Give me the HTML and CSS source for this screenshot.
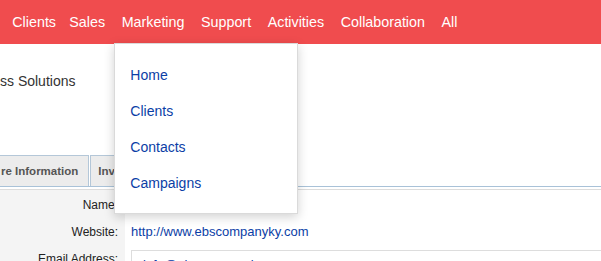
FILE: index.html
```html
<!DOCTYPE html>
<html lang="en">
<head>
    <meta charset="UTF-8">
    <title>Client - EBS</title>
    <link rel="stylesheet" href="styles.css">
</head>
<body>
    <header class="topbar">
        <nav class="menu">
            <span class="menu-item">Clients</span>
            <span class="menu-item">Sales</span>
            <span class="menu-item menu-open">Marketing
                <ul class="dropdown">
                    <li><a href="#">Home</a></li>
                    <li><a href="#">Clients</a></li>
                    <li><a href="#">Contacts</a></li>
                    <li><a href="#">Campaigns</a></li>
                </ul>
            </span>
            <span class="menu-item">Support</span>
            <span class="menu-item">Activities</span>
            <span class="menu-item">Collaboration</span>
            <span class="menu-item">All</span>
        </nav>
    </header>

    <div class="company">ss Solutions</div>

    <div class="tabs">
        <div class="tab">re Information</div>
        <div class="tab">Invoices</div>
    </div>
    <div class="tab-rule"></div>

    <div class="details">
        <div class="label">Name:</div>
        <div class="value">EBS Company</div>
        <div class="label">Website:</div>
        <div class="value"><a href="#">http://www.ebscompanyky.com</a></div>
        <div class="label">Email Address:</div>
        <div class="value"><div class="value-box"><a href="#">info@ebscompanyky.com</a></div></div>
    </div>
</body>
</html>
```

FILE: styles.css
```css
body {
    margin: 0;
    font-family: "Liberation Sans", Arial, sans-serif;
    background-color: #fff;
    overflow: hidden;
}

/* top navigation */
.topbar {
    background-color: #f04c4e;
    height: 44px;
}
.menu {
    display: flex;
    padding-left: 4px;
}
.menu-item {
    position: relative;
    color: #fff;
    font-size: 14.3px;
    line-height: 44px;
    padding: 0 8.3px;
}
.menu-item:first-child {
    padding-right: 5px;
}
.dropdown {
    position: absolute;
    top: 43px;
    left: 1px;
    z-index: 2;
    width: 182px;
    margin: 0;
    padding: 13px 0 12px;
    list-style: none;
    background-color: #fff;
    border: 1px solid #dadada;
    box-shadow: 0 3px 10px rgba(0, 0, 0, 0.18);
}
.dropdown li {
    line-height: 36px;
    padding-left: 15px;
}
.dropdown a {
    color: #0b3ea6;
    text-decoration: none;
    font-size: 14px;
}

/* page header */
.company {
    color: #333;
    font-size: 14px;
    line-height: 20px;
    padding-top: 27px;
    height: 84px;
}

/* tabs */
.tabs {
    display: flex;
    gap: 1px;
    height: 31px;
}
.tab {
    background-color: #ececec;
    border: 1px solid #b4c7d8;
    border-bottom: none;
    border-left: none;
    color: #555;
    font-size: 11.5px;
    font-weight: bold;
    line-height: 30px;
    padding: 0 10px 0 1px;
}
.tab + .tab {
    border-left: 1px solid #b4c7d8;
    padding: 0 12px 0 7px;
}
.tab-rule {
    border-top: 1px solid #a9c2d8;
    border-bottom: 1px solid #dcdcdc;
    height: 2px;
}

/* detail form */
.details {
    display: grid;
    grid-template-columns: 125px 1fr;
    grid-auto-rows: 27px;
}
.label {
    background-color: #f4f4f4;
    color: #222;
    font-size: 12px;
    text-align: right;
    padding: 8px 7px 0 0;
}
.value {
    padding: 7px 0 0 6px;
    font-size: 13px;
}
.value a {
    color: #0b3ea6;
    text-decoration: none;
}
.value-box {
    border: 1px solid #ddd;
    border-right: none;
    height: 30px;
    padding: 6px 11px 5px;
    margin-top: -1px;
}
```
